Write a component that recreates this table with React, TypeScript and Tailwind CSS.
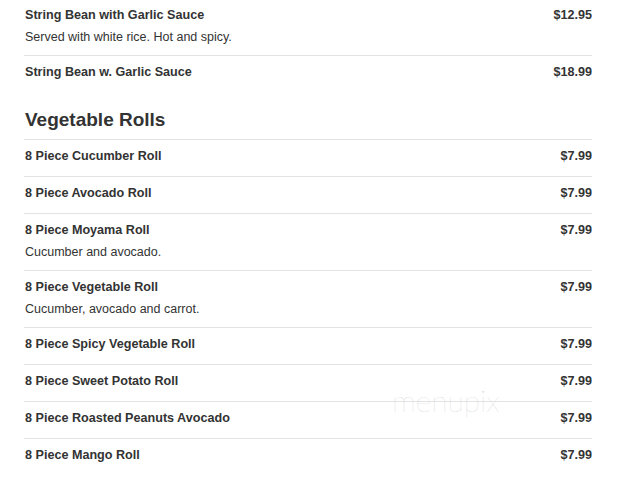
type Item = { name: string; price: string; desc?: string }

const topItems: Item[] = [
  { name: "String Bean with Garlic Sauce", price: "$12.95", desc: "Served with white rice. Hot and spicy." },
  { name: "String Bean w. Garlic Sauce", price: "$18.99" },
]

const rolls: Item[] = [
  { name: "8 Piece Cucumber Roll", price: "$7.99" },
  { name: "8 Piece Avocado Roll", price: "$7.99" },
  { name: "8 Piece Moyama Roll", price: "$7.99", desc: "Cucumber and avocado." },
  { name: "8 Piece Vegetable Roll", price: "$7.99", desc: "Cucumber, avocado and carrot." },
  { name: "8 Piece Spicy Vegetable Roll", price: "$7.99" },
  { name: "8 Piece Sweet Potato Roll", price: "$7.99" },
  { name: "8 Piece Roasted Peanuts Avocado", price: "$7.99" },
  { name: "8 Piece Mango Roll", price: "$7.99" },
]

function MenuRow({ item, first }: { item: Item; first?: boolean }) {
  const pad = item.desc ? "pb-[10px]" : "pb-[12px]"
  return (
    <div className={first ? `pt-[7px] ${pad} pl-px` : `border-t border-[#e3e3e3] pt-[8px] ${pad} pl-px`}>
      <div className="flex items-start justify-between">
        <div className="text-[12.6px] leading-[16px] font-bold text-[#333]">{item.name}</div>
        <div className="text-[12.6px] leading-[16px] font-bold text-[#333]">{item.price}</div>
      </div>
      {item.desc && (
        <div className="mt-[6px] text-[12.5px] leading-[16px] text-[#333]">{item.desc}</div>
      )}
    </div>
  )
}

export default function App() {
  return (
    <div className="relative w-[625px] h-[483px] bg-white overflow-hidden font-['Liberation_Sans',Arial,sans-serif]">
      <div className="ml-[24px] w-[568px]">
        {/* previous section tail */}
        <div>
          {topItems.map((item, i) => (
            <MenuRow key={item.name} item={item} first={i === 0} />
          ))}
        </div>

        {/* Vegetable Rolls */}
        <div className="mt-[17px]">
          <h2 className="pb-[8px] pl-px text-[19px] leading-[22px] font-bold text-[#333]">
            Vegetable Rolls
          </h2>
          {rolls.map((item) => (
            <MenuRow key={item.name} item={item} />
          ))}
        </div>
      </div>

      {/* watermark */}
      <div className="absolute left-[392px] top-[384px] text-[30px] leading-[32px] font-thin text-[#d6d6d6] font-['Lato',sans-serif] pointer-events-none">
        menupix
      </div>
    </div>
  )
}
